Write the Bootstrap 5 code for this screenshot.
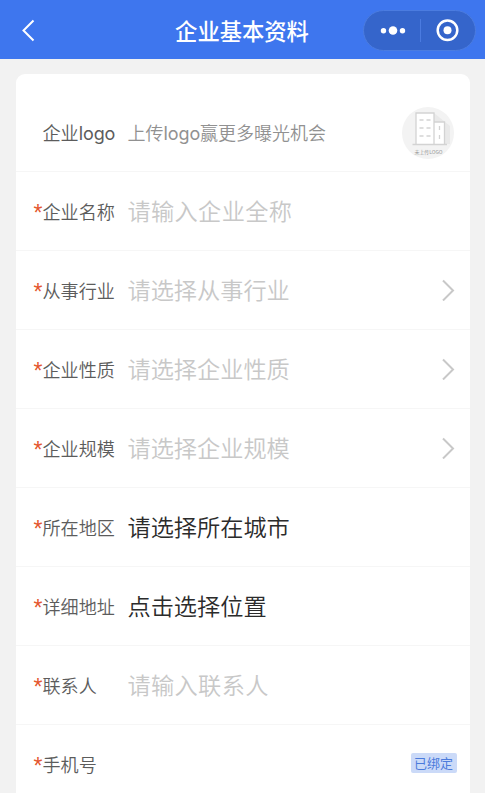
<!DOCTYPE html>
<html lang="zh-CN">
<head>
<meta charset="utf-8">
<meta name="viewport" content="width=device-width, initial-scale=1">
<title>企业基本资料</title>
<link href="https://cdn.jsdelivr.net/npm/bootstrap@5.3.0/dist/css/bootstrap.min.css" rel="stylesheet">
<style>
body{background:#f2f2f2;font-family:"Noto Sans CJK SC",sans-serif;height:793px;overflow:hidden}
.topbar{height:59px;background:#3e76ee;padding:2px 9px 0 22px}
.topbar h1{font-size:22.3px;font-weight:500;line-height:32px;padding:0 13px 2px 0}
.side{width:112px}
.capsule{width:113px;height:41px;background:#3565cb;border:1px solid #4b7ce0}
.sheet{margin:15px 15.5px 0;height:740px;border-radius:9px 9px 0 0}
.field{height:79px;border-bottom:1px solid #f6f6f6;padding:0 14px 1px 18px}
.field.logo-field{height:98px;padding-top:21px;padding-right:16px}
.caption{width:85px;font-size:18.1px;font-weight:350;color:#5c5c5c;line-height:28px;white-space:nowrap}
.star{width:9px;color:#e4572e;font-family:"Liberation Sans",sans-serif;font-size:23px;line-height:28px;padding-top:4px}
.val{font-size:23.2px;font-weight:350;line-height:34px;color:#2b2b2b;white-space:nowrap;margin-top:-1px}
.val.hint{color:#c8c8c8}
.val.typed{letter-spacing:.35px}
.tip{font-size:18px;font-weight:350;color:#919191;line-height:28px}
.latin{font-family:Inter,Roboto,sans-serif;font-size:18px;font-weight:400;letter-spacing:-.1px}
.bound{width:46px;height:20px;font-size:13px;line-height:19px;background:#cbdaf8;color:#4b7bdc;border-radius:2px;margin:-3px -1px 0 0}
</style>
<script src="https://cdn.jsdelivr.net/npm/bootstrap@5.3.0/dist/js/bootstrap.bundle.min.js"></script>
</head>
<body>
<header class="topbar d-flex align-items-center justify-content-between text-white">
  <div class="side d-flex"><svg width="14" height="24" viewBox="0 0 14 24" fill="none" stroke="#fff" stroke-width="2"><path d="M11.5 1.5 1.5 11.5l10 10"/></svg></div>
  <h1 class="m-0 flex-fill text-center">企业基本资料</h1>
  <div class="capsule rounded-pill d-flex align-items-center">
    <svg width="111" height="39" viewBox="-1 0 111 39" fill="#fff"><circle cx="18.5" cy="19.7" r="2.7"/><circle cx="28" cy="19.5" r="4.3"/><circle cx="37.5" cy="19.7" r="2.7"/><path d="M55.5 8v23" stroke="#4b7be0"/><circle cx="82.5" cy="19.2" r="9.8" fill="none" stroke="#fff" stroke-width="2.5"/><circle cx="82.5" cy="19.2" r="4"/></svg>
  </div>
</header>
<main class="sheet bg-white">
  <div class="field logo-field d-flex align-items-center"><span class="star"></span><span class="caption">企业<span class="latin">logo</span></span><span class="tip">上传<span class="latin">logo</span>赢更多曝光机会</span>
    <svg class="ms-auto" width="52" height="52" viewBox="0 0 52 52"><circle cx="26" cy="26" r="26" fill="#f3f3f3"/><path d="M32 6 48 19v18H32z" fill="#e9e9e9"/><g fill="#fff" stroke="#d3d3d3" stroke-width="1.3"><path d="M14 37.5V6h18v31.5zM32 15h10.500v22.500H32zM10.500 37.500H45"/><path d="M17.500 13h4m3 0h4m-11 8h4m3 0h4m-11 8h4m3 0h4M37.500 19v4m0 5v4"/></g><text x="12.500" y="46.500" font-size="5" textLength="28" fill="#999">未上传LOGO</text></svg>
  </div>
  <div class="field d-flex align-items-center"><span class="star">*</span><span class="caption">企业名称</span><span class="val hint typed">请输入企业全称</span></div>
  <div class="field d-flex align-items-center"><span class="star">*</span><span class="caption">从事行业</span><span class="val hint">请选择从事行业</span><svg class="ms-auto" width="15" height="22" viewBox="0 0 15 22" fill="none" stroke="#c8c8c8" stroke-width="2"><path d="m2 1.500 10 10-10 10"/></svg></div>
  <div class="field d-flex align-items-center"><span class="star">*</span><span class="caption">企业性质</span><span class="val hint">请选择企业性质</span><svg class="ms-auto" width="15" height="22" viewBox="0 0 15 22" fill="none" stroke="#c8c8c8" stroke-width="2"><path d="m2 1.500 10 10-10 10"/></svg></div>
  <div class="field d-flex align-items-center"><span class="star">*</span><span class="caption">企业规模</span><span class="val hint">请选择企业规模</span><svg class="ms-auto" width="15" height="22" viewBox="0 0 15 22" fill="none" stroke="#c8c8c8" stroke-width="2"><path d="m2 1.500 10 10-10 10"/></svg></div>
  <div class="field d-flex align-items-center"><span class="star">*</span><span class="caption">所在地区</span><span class="val">请选择所在城市</span></div>
  <div class="field d-flex align-items-center"><span class="star">*</span><span class="caption">详细地址</span><span class="val">点击选择位置</span></div>
  <div class="field d-flex align-items-center"><span class="star">*</span><span class="caption">联系人</span><span class="val hint typed">请输入联系人</span></div>
  <div class="field d-flex align-items-center border-0"><span class="star">*</span><span class="caption">手机号</span><span class="bound ms-auto text-center">已绑定</span></div>
</main>
</body>
</html>
